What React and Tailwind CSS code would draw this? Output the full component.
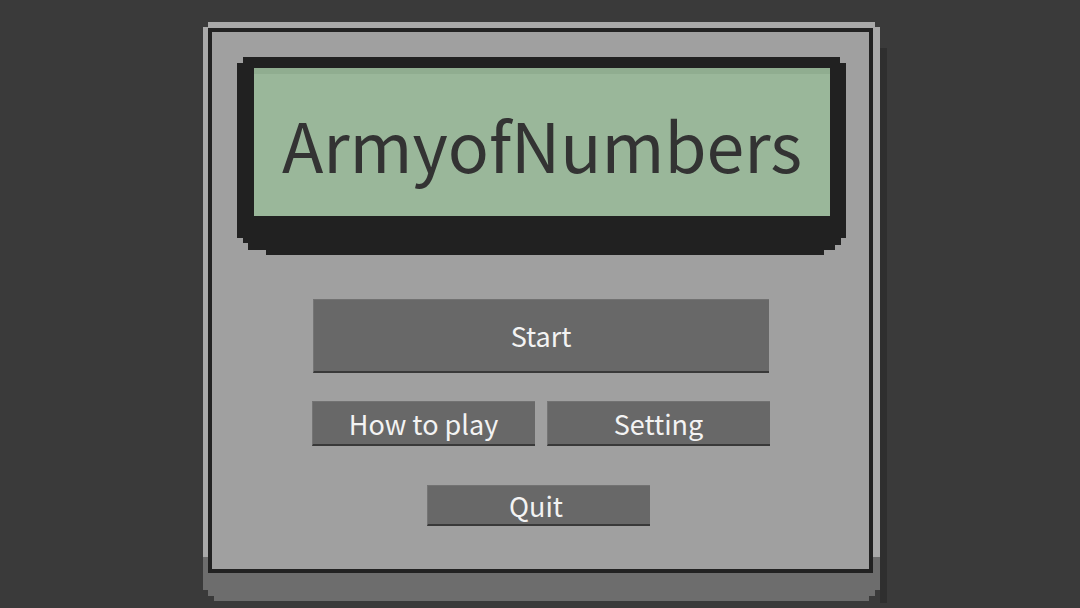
export default function App() {
  const font = { fontFamily: '"Noto Sans CJK SC", "Noto Sans", sans-serif' };
  const btn =
    "flex items-center justify-center bg-[#686868] border-b-2 border-[#393939] border-l border-l-[#757575] border-t border-t-[#727272] text-[#f3f3f3]";
  return (
    <div className="w-[1080px] h-[608px] bg-[#3a3a3a] flex justify-center overflow-hidden" style={font}>
      <div className="relative mt-[22px] ml-[3px] w-[677px] h-[581px]">
        {/* right shadow */}
        <div className="absolute left-[677px] top-[26px] w-[7px] h-[555px] bg-[#2f2f2f]" />
        {/* face */}
        <div className="relative h-[557px] pt-[6px] pl-[5px] pr-[7px] pb-[6px] bg-[linear-gradient(to_bottom,#a9a9a9_0,#a9a9a9_535px,#6d6d6d_535px)] [clip-path:polygon(0_5px,5px_5px,5px_0,calc(100%-5px)_0,calc(100%-5px)_5px,100%_5px,100%_100%,0_100%)]">
          <div className="h-full border-4 border-[#222222] bg-[#a0a0a0] flex flex-col items-center pt-[25px]">
            {/* LCD frame */}
            <div className="w-[609px] h-[198px] bg-[#212121] pl-[17px] pr-[16px] pt-[11px] pb-[39px] self-start ml-[25px] [clip-path:polygon(0_6px,6px_6px,6px_0,603px_0,603px_6px,609px_6px,609px_181px,604px_181px,604px_188px,598px_188px,598px_193px,587px_193px,587px_198px,29px_198px,29px_193px,11px_193px,11px_186px,6px_186px,6px_181px,0_181px)]">
              <div className="h-full bg-[#9ab79a] border-t-[6px] border-[#90ad90] flex items-center justify-center">
                <span className="text-[68px] leading-none text-[#333333] -mt-[2px]">ArmyofNumbers</span>
              </div>
            </div>
            {/* buttons */}
            <div className={`${btn} mt-[44px] w-[456px] h-[74px] text-[27px] pt-[2px]`}>Start</div>
            <div className="mt-[28px] flex gap-[12px] w-[458px]">
              <div className={`${btn} w-[223px] h-[45px] text-[27px] pt-[3px]`}>How to play</div>
              <div className={`${btn} w-[223px] h-[45px] text-[27px] pt-[3px]`}>Setting</div>
            </div>
            <div className={`${btn} mt-[39px] w-[223px] h-[41px] text-[27px] -ml-[4px] pr-[6px] pt-[2px]`}>Quit</div>
          </div>
        </div>
        {/* ledge */}
        <div className="h-[22px] bg-[#6d6d6d] [clip-path:polygon(0_0,100%_0,100%_11px,calc(100%-5px)_11px,calc(100%-5px)_17px,calc(100%-11px)_17px,calc(100%-11px)_100%,11px_100%,11px_17px,5px_17px,5px_11px,0_11px)]" />
      </div>
    </div>
  );
}
